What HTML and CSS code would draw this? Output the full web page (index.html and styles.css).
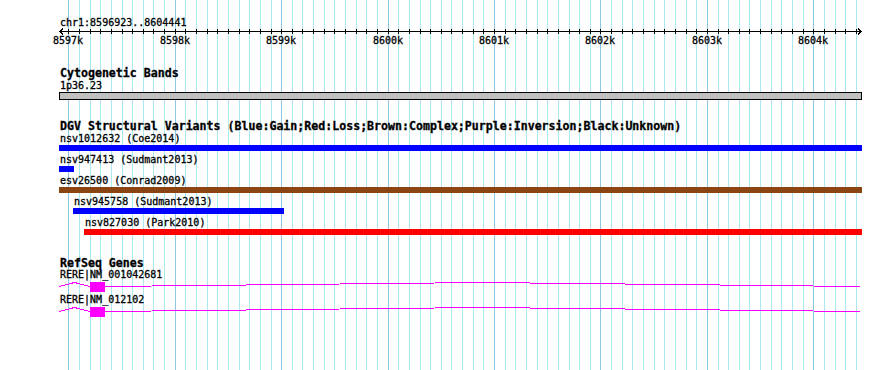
FILE: index.html
```html
<!DOCTYPE html>
<html lang="en">
<head>
    <meta charset="UTF-8">
    <title>chr1:8596923..8604441</title>
    <link rel="stylesheet" href="styles.css">
</head>
<body>
    <div class="browser">
        <!-- grid lines every 100 bp, behind all tracks -->
        <svg class="grid" width="890" height="370">
            <path class="grid-minor" d="M79.5 0v370M90.5 0v370M100.5 0v370M111.5 0v370M122.5 0v370M132.5 0v370M143.5 0v370M153.5 0v370M164.5 0v370M185.5 0v370M196.5 0v370M207.5 0v370M217.5 0v370M228.5 0v370M239.5 0v370M249.5 0v370M260.5 0v370M271.5 0v370M292.5 0v370M302.5 0v370M313.5 0v370M324.5 0v370M334.5 0v370M345.5 0v370M356.5 0v370M366.5 0v370M377.5 0v370M398.5 0v370M409.5 0v370M420.5 0v370M430.5 0v370M441.5 0v370M451.5 0v370M462.5 0v370M473.5 0v370M483.5 0v370M505.5 0v370M515.5 0v370M526.5 0v370M537.5 0v370M547.5 0v370M558.5 0v370M569.5 0v370M579.5 0v370M590.5 0v370M611.5 0v370M622.5 0v370M632.5 0v370M643.5 0v370M654.5 0v370M664.5 0v370M675.5 0v370M686.5 0v370M696.5 0v370M718.5 0v370M728.5 0v370M739.5 0v370M749.5 0v370M760.5 0v370M771.5 0v370M781.5 0v370M792.5 0v370M803.5 0v370M824.5 0v370M835.5 0v370M845.5 0v370M856.5 0v370"/>
            <path class="grid-major" d="M68.5 0v370M175.5 0v370M281.5 0v370M388.5 0v370M494.5 0v370M600.5 0v370M707.5 0v370M813.5 0v370"/>
        </svg>

        <div class="tracks">
            <svg class="ruler" width="890" height="50">
                <text class="ruler-name" x="60" y="26">chr1:8596923..8604441</text>
                <path class="ruler-line" d="M60 31.5H861M63 28.5L60 31.5L63 34.5M858 28.5L861 31.5L858 34.5"/>
                <path class="ruler-line" d="M68.5 29v5M79.5 29v5M90.5 29v5M100.5 29v5M111.5 29v5M122.5 29v5M132.5 29v5M143.5 29v5M153.5 29v5M164.5 29v5M175.5 29v5M185.5 29v5M196.5 29v5M207.5 29v5M217.5 29v5M228.5 29v5M239.5 29v5M249.5 29v5M260.5 29v5M271.5 29v5M281.5 29v5M292.5 29v5M302.5 29v5M313.5 29v5M324.5 29v5M334.5 29v5M345.5 29v5M356.5 29v5M366.5 29v5M377.5 29v5M388.5 29v5M398.5 29v5M409.5 29v5M420.5 29v5M430.5 29v5M441.5 29v5M451.5 29v5M462.5 29v5M473.5 29v5M483.5 29v5M494.5 29v5M505.5 29v5M515.5 29v5M526.5 29v5M537.5 29v5M547.5 29v5M558.5 29v5M569.5 29v5M579.5 29v5M590.5 29v5M600.5 29v5M611.5 29v5M622.5 29v5M632.5 29v5M643.5 29v5M654.5 29v5M664.5 29v5M675.5 29v5M686.5 29v5M696.5 29v5M707.5 29v5M718.5 29v5M728.5 29v5M739.5 29v5M749.5 29v5M760.5 29v5M771.5 29v5M781.5 29v5M792.5 29v5M803.5 29v5M813.5 29v5M824.5 29v5M835.5 29v5M845.5 29v5M856.5 29v5"/>
                <g class="ruler-ticks">
                    <text x="68" y="44">8597k</text>
                    <text x="175" y="44">8598k</text>
                    <text x="281" y="44">8599k</text>
                    <text x="388" y="44">8600k</text>
                    <text x="494" y="44">8601k</text>
                    <text x="600" y="44">8602k</text>
                    <text x="707" y="44">8603k</text>
                    <text x="813" y="44">8604k</text>
                </g>
            </svg>

            <div class="track track-bands">
                <div class="track-title">Cytogenetic Bands</div>
                <div class="feature">
                    <div class="feature-label">1p36.23</div>
                    <div class="band"></div>
                </div>
            </div>

            <div class="track track-dgv">
                <div class="track-title">DGV Structural Variants (Blue:Gain;Red:Loss;Brown:Complex;Purple:Inversion;Black:Unknown)</div>
                <div class="feature">
                    <div class="feature-label">nsv1012632 (Coe2014)</div>
                    <div class="bar gain" style="width: 803px"></div>
                </div>
                <div class="feature">
                    <div class="feature-label">nsv947413 (Sudmant2013)</div>
                    <div class="bar gain" style="width: 15px"></div>
                </div>
                <div class="feature">
                    <div class="feature-label">esv26500 (Conrad2009)</div>
                    <div class="bar complex" style="width: 803px"></div>
                </div>
                <div class="feature">
                    <div class="feature-label" style="margin-left: 14px">nsv945758 (Sudmant2013)</div>
                    <div class="bar gain" style="margin-left: 14px; width: 211px"></div>
                </div>
                <div class="feature">
                    <div class="feature-label" style="margin-left: 25px">nsv827030 (Park2010)</div>
                    <div class="bar loss" style="margin-left: 25px; width: 778px"></div>
                </div>
            </div>

            <div class="track track-genes">
                <div class="track-title">RefSeq Genes</div>
                <div class="gene">
                    <div class="gene-label">RERE|NM_001042681</div>
                    <svg class="transcript" width="803" height="12">
                        <polyline class="intron" points="0,5.5 15.5,1.5 31,5.5"/>
                        <rect class="exon" x="31" y="1" width="15" height="10"/>
                        <polyline class="intron" points="46,5.5 423.5,1.5 801,5.5"/>
                    </svg>
                </div>
                <div class="gene">
                    <div class="gene-label">RERE|NM_012102</div>
                    <svg class="transcript" width="803" height="12">
                        <polyline class="intron" points="0,5.5 15.5,1.5 31,5.5"/>
                        <rect class="exon" x="31" y="1" width="15" height="10"/>
                        <polyline class="intron" points="46,5.5 423.5,1.5 801,5.5"/>
                    </svg>
                </div>
            </div>
        </div>
    </div>
</body>
</html>
```

FILE: styles.css
```css
body {
    margin: 0;
    background: #ffffff;
}
.browser {
    position: relative;
    width: 890px;
    height: 370px;
    overflow: hidden;
    font-family: "DejaVu Sans Mono", "Liberation Mono", monospace;
    font-size: 10px;
    color: #000000;
    -webkit-text-stroke: 0.3px #000000;
}
.grid {
    position: absolute;
    left: 0;
    top: 0;
    shape-rendering: crispEdges;
}
.grid-minor {
    stroke: #aae9ef;
    stroke-width: 1;
}
.grid-major {
    stroke: #8cc6e6;
    stroke-width: 1;
}
.tracks {
    position: relative;
}
.ruler {
    display: block;
    shape-rendering: crispEdges;
}
.ruler text {
    font-family: "DejaVu Sans Mono", "Liberation Mono", monospace;
    font-size: 10px;
    fill: #000000;
    stroke: #000000;
    stroke-width: 0.3px;
}
.ruler-ticks text {
    text-anchor: middle;
}
.ruler-line {
    stroke: #000000;
    stroke-width: 1;
    fill: none;
}
.track {
    padding-left: 59px;
}
.track-title {
    font-weight: bold;
    font-size: 11.6px;
    line-height: 13px;
    white-space: nowrap;
    padding-left: 1px;
}
.track-bands {
    margin-top: 17px;
}
.track-dgv {
    margin-top: 20px;
}
.track-genes {
    margin-top: 22px;
}
.feature {
    margin-bottom: 3px;
}
.feature-label {
    line-height: 11px;
    white-space: nowrap;
    padding-left: 1px;
}
.band {
    width: 803px;
    height: 8px;
    margin-top: 1px;
    box-sizing: border-box;
    border: 1px solid #000000;
    background: #c0c0c0;
}
.bar {
    height: 6px;
    margin-top: 1px;
}
.gain {
    background: #0000ff;
}
.loss {
    background: #ff0000;
}
.complex {
    background: #8b4513;
}
.gene {
    margin-bottom: 2px;
}
.gene-label {
    height: 11px;
    line-height: 10px;
    white-space: nowrap;
    padding-left: 1px;
}
.transcript {
    display: block;
    shape-rendering: crispEdges;
}
.intron {
    fill: none;
    stroke: #ff00ff;
    stroke-width: 1;
}
.exon {
    fill: #ff00ff;
}
```
